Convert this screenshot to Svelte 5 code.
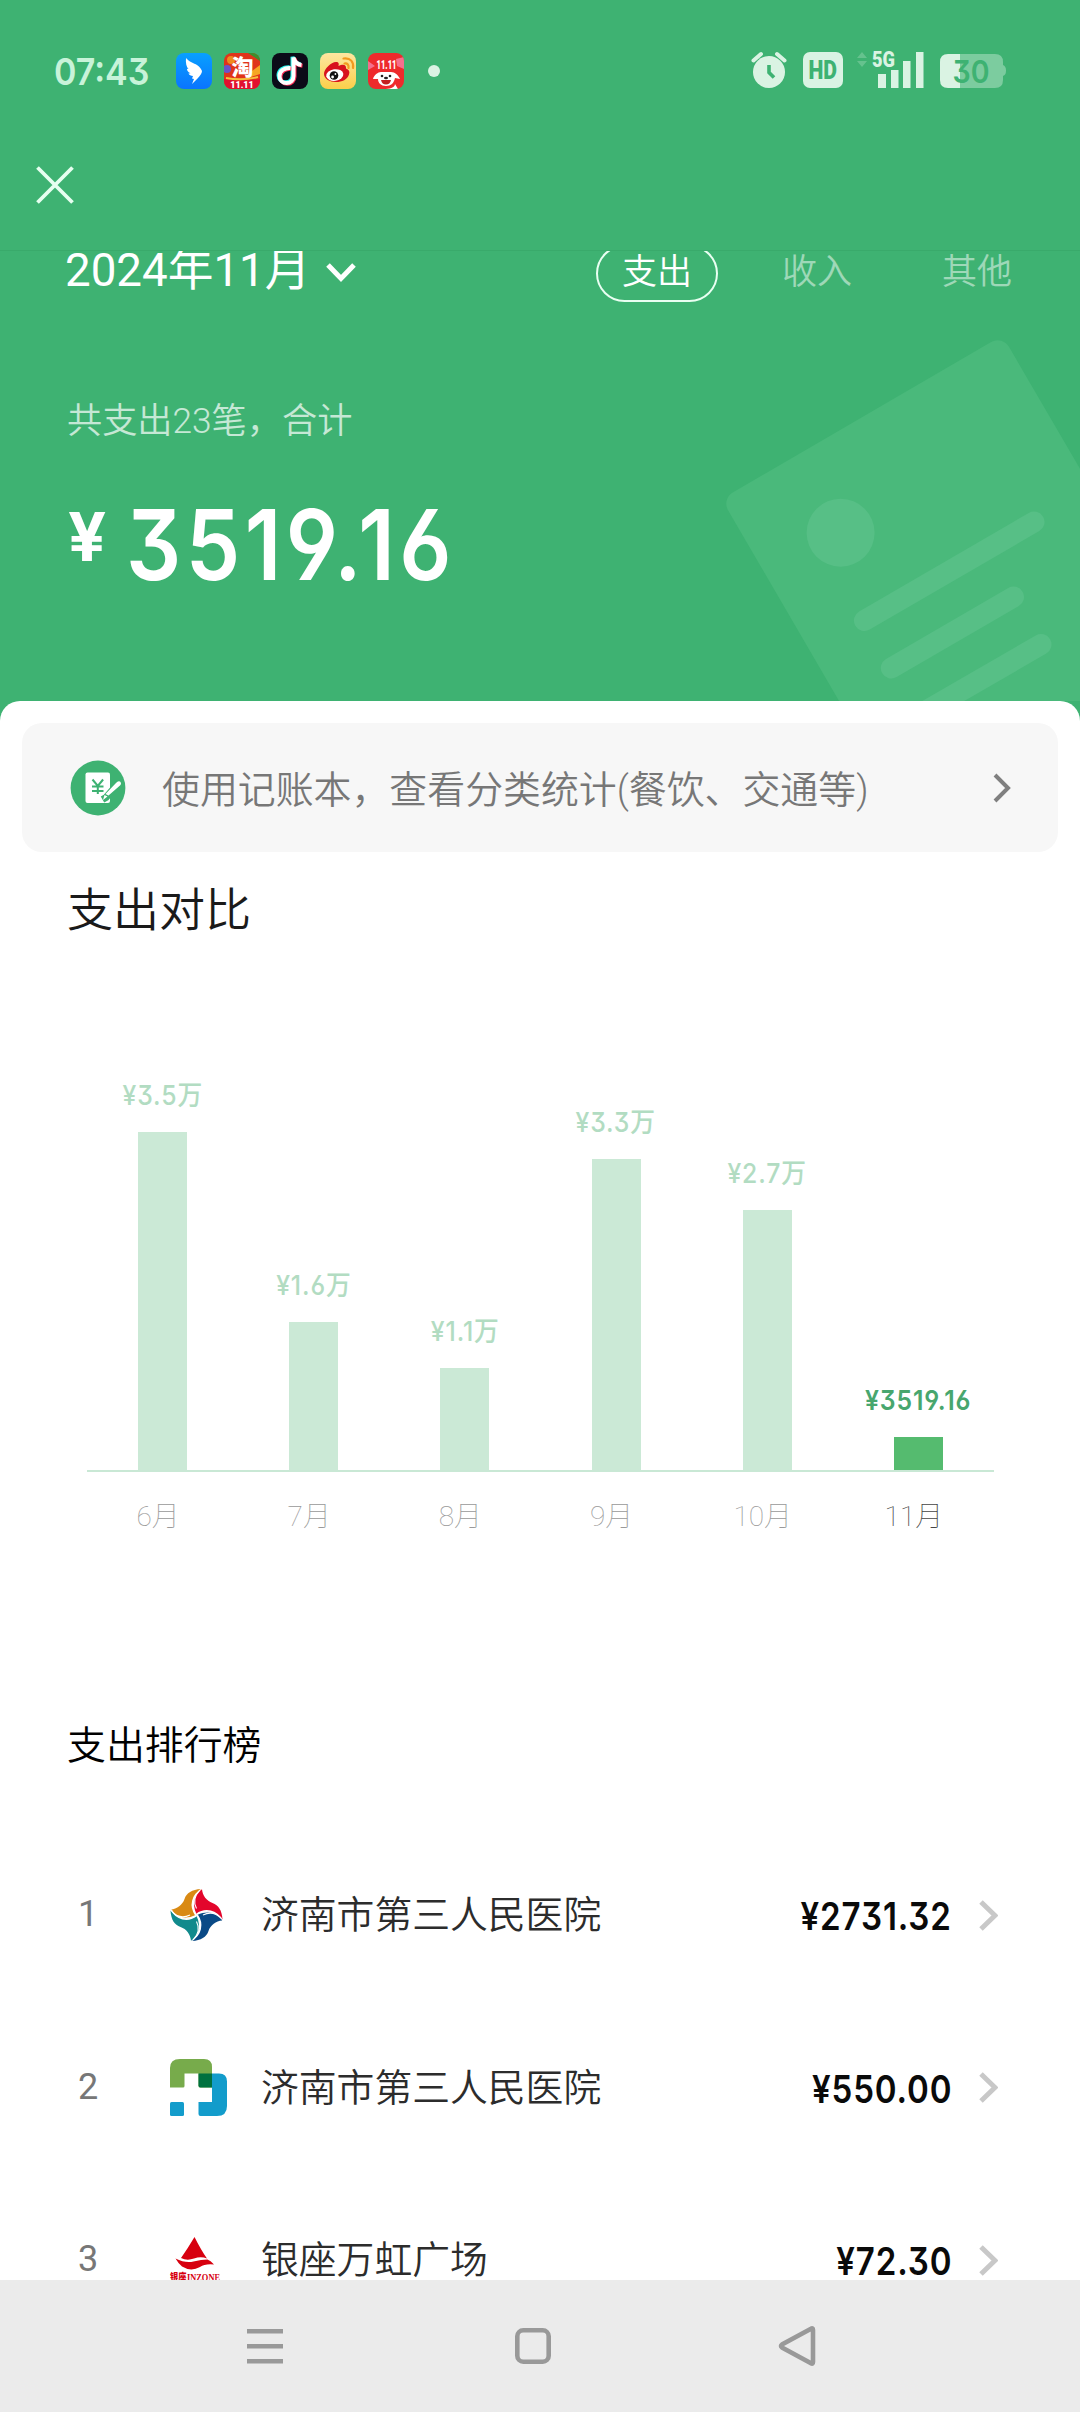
<script>
  const tabs = ['支出', '收入', '其他'];
  let activeTab = '支出';

  const months = [
    { name: '6月', label: '¥3.5万', height: 338 },
    { name: '7月', label: '¥1.6万', height: 148 },
    { name: '8月', label: '¥1.1万', height: 102 },
    { name: '9月', label: '¥3.3万', height: 311 },
    { name: '10月', label: '¥2.7万', height: 260 },
    { name: '11月', label: '¥3519.16', height: 33, current: true }
  ];

  const ranking = [
    { logo: 'pinwheel', name: '济南市第三人民医院', amount: '¥2731.32' },
    { logo: 'blocks', name: '济南市第三人民医院', amount: '¥550.00' },
    { logo: 'sail', name: '银座万虹广场', amount: '¥72.30' }
  ];

  const petals = [
    { color: '#d98a14', angle: 0 },
    { color: '#e3062c', angle: 90 },
    { color: '#0a4a86', angle: 180 },
    { color: '#118a8c', angle: 270 }
  ];
</script>

<div class="screen">
  <header>
    <div class="status">
      <span class="time num">07:43</span>
      <div class="apps">
        <svg viewBox="0 0 36 36">
          <defs>
            <linearGradient id="ding" x1="0" y1="0" x2="0" y2="1">
              <stop offset="0" stop-color="#08a0ff" />
              <stop offset="1" stop-color="#0a74ff" />
            </linearGradient>
          </defs>
          <rect width="36" height="36" rx="8" fill="url(#ding)" />
          <path d="M10 5c3 4 8 5 11 7 3 2 4 4 5 6 0 2-2 5-4 7l-6 6 2-5-2-.5 1-2.500c-2 0-4-1-4.500-2.500l2-.3c-3-1.200-3.500-3-3.500-4.500l1.500.3c-2-2-3-6-2.500-11z" fill="#fff" />
        </svg>
        <svg viewBox="0 0 36 36">
          <clipPath id="tao"><rect width="36" height="36" rx="8" /></clipPath>
          <g clip-path="url(#tao)">
            <rect width="36" height="36" fill="#e0341a" />
            <circle cx="7" cy="7" r="4" fill="#f08a1d" />
            <path d="M24 0h12v8z" fill="#3d8f2e" />
            <circle cx="3" cy="16" r="4" fill="#6b53c9" />
            <path d="M28 18l8-6v9l-9 3z" fill="#f6a723" />
            <path d="M0 26q18 3 36 0v10H0z" fill="#e2102f" />
            <path d="M2 25q16 3 32-1" stroke="#f6c33c" stroke-width="2" fill="none" />
          </g>
          <text x="18.500" y="22" class="tao-char">淘</text>
          <text x="18" y="34.500" class="tao-date">11.11</text>
        </svg>
        <svg viewBox="0 0 36 36">
          <rect width="36" height="36" rx="8" fill="#0b0b18" />
          <g fill="none" stroke-width="4">
            <path d="M18.500 15c-6-.5-11 3-11 8 0 4 3 7 7 7s7-3 7-7V4.500c1 5 4 7 8 7.500" stroke="#25f4ee" transform="translate(-1 -.8)" />
            <path d="M18.500 15c-6-.5-11 3-11 8 0 4 3 7 7 7s7-3 7-7V4.500c1 5 4 7 8 7.500" stroke="#fe2c55" transform="translate(1 .8)" />
            <path d="M18.500 15c-6-.5-11 3-11 8 0 4 3 7 7 7s7-3 7-7V4.500c1 5 4 7 8 7.500" stroke="#fff" />
          </g>
        </svg>
        <svg viewBox="0 0 36 36">
          <defs>
            <linearGradient id="weibo" x1="0" y1="0" x2="0" y2="1">
              <stop offset="0" stop-color="#fde6a0" />
              <stop offset="1" stop-color="#fbcf4a" />
            </linearGradient>
          </defs>
          <rect width="36" height="36" rx="8" fill="url(#weibo)" />
          <path d="M4 21c0-5 7-12 12-12 3 0 3 2 2.500 4 4-2 8-2 7.500 2.500 3 1 4 3 3 6-1.500 5-7 7.500-13 7.500S4 26 4 21z" fill="#d8121d" />
          <ellipse cx="14.800" cy="22" rx="8.600" ry="5.800" transform="rotate(-8 15 22)" fill="#fff" />
          <circle cx="14" cy="22.500" r="4.300" fill="#111" />
          <circle cx="12.600" cy="24" r="1.400" fill="#fff" />
          <circle cx="15.400" cy="21" r=".9" fill="#fff" />
          <path d="M24.500 10.500c3-.5 4.500 1.500 4 4.500M23.500 5.500c7-1 10.500 3.500 9.500 9.500" fill="none" stroke="#f29a1f" stroke-width="2.200" stroke-linecap="round" />
        </svg>
        <svg viewBox="0 0 36 36">
          <clipPath id="jd"><rect width="36" height="36" rx="8" /></clipPath>
          <g clip-path="url(#jd)">
            <rect width="36" height="36" fill="#ee2a2c" />
            <path d="M28 6l8-2v12l-7-3zM0 8l7 5-7 4z" fill="#f46f8d" />
            <path d="M5 26c1-4 5-7 8-7h10c4 0 7 3 9 7l-5-1c-1 5-4 8-9 8s-8-3-8-7z" fill="#fff" />
            <path d="M16 36c5 0 11-1 11-5l3 5z" fill="#fff" />
            <circle cx="14" cy="23" r="1.300" fill="#222" />
            <circle cx="22" cy="23" r="1.300" fill="#222" />
            <ellipse cx="18" cy="25" rx="2" ry="1.200" fill="#222" />
            <path d="M13 27h10q-1 4.500-5 4.500T13 27z" fill="#c4201f" />
          </g>
          <text x="18.500" y="16" class="jd-date" textLength="20" lengthAdjust="spacingAndGlyphs">11.11</text>
        </svg>
      </div>
      <i class="dot"></i>
      <svg class="indicators" width="256" height="40" viewBox="750 50 256 40">
        <g fill="#daf3e3">
          <circle cx="769" cy="72" r="16" />
          <path d="M753.500 60.500l7.500-6.500M784.500 60.500l-7.500-6.500" stroke="#daf3e3" stroke-width="4" stroke-linecap="round" />
          <path d="M769 65v7.500l5 5" fill="none" stroke="#3eb272" stroke-width="3.600" />
          <rect x="803" y="52" width="40" height="36" rx="7" />
          <text x="808.500" y="79" class="hd" textLength="28.500" lengthAdjust="spacingAndGlyphs">HD</text>
          <path d="M857 58l5-6 5 6zM857 61l5 6 5-6z" opacity=".25" />
          <text x="872" y="67" class="net" textLength="23" lengthAdjust="spacingAndGlyphs">5G</text>
          <path d="M878 74h8v14h-8zM891 70h7.500v18H891zM903 61h7.500v27H903zM916 52h7.500v36H916z" />
          <path d="M960 54h35q8 0 8 8v3q3 1 3 5.500t-3 5.500v4q0 8-8 8h-35z" opacity=".4" />
          <path d="M948 54h12v34h-12q-8 0-8-8V62q0-8 8-8z" />
          <text x="952.500" y="83" class="battery" textLength="37" lengthAdjust="spacingAndGlyphs">30</text>
        </g>
      </svg>
    </div>
    <svg class="close" width="38" height="38" viewBox="0 0 38 38">
      <path d="M1.500 1.500l35 35M36.500 1.500l-35 35" />
    </svg>
  </header>

  <main>
    <section class="summary">
      <svg class="bill" width="1080" height="450" viewBox="0 251 1080 450">
        <rect width="325" height="460" rx="13" transform="translate(721.500 499) rotate(-30.200)" fill="#4ab97b" />
        <circle cx="840.600" cy="532.700" r="34" fill="#57bf86" />
        <path d="M864.400 620.500L1034 522M891.300 668L1013.500 597M900 726L1041 644.500" stroke="#57bf86" stroke-width="21" stroke-linecap="round" />
      </svg>
      <div class="filters">
        <span class="month">2024年11月</span>
        <svg width="30" height="22" viewBox="0 0 30 22">
          <path d="M2 3l13 13.500L28 3" fill="none" stroke="#fff" stroke-width="5" />
        </svg>
        <nav>
          {#each tabs as tab}
            <button class:active={tab === activeTab} on:click={() => (activeTab = tab)}>{tab}</button>
          {/each}
        </nav>
      </div>
      <p class="count">共支出23笔，合计</p>
      <p class="total"><span class="yen num">¥</span><span class="sum num">3519.16</span></p>
    </section>

    <section class="sheet">
      <a class="ledger" href="#ledger" on:click|preventDefault>
        <svg width="56" height="56" viewBox="0 0 56 56">
          <circle cx="28" cy="28" r="27.400" fill="#3eb272" />
          <rect x="15.500" y="12.500" width="24.500" height="30.500" rx="2" fill="#fff" />
          <path d="M22.500 19.500l5.300 6.500 5.300-6.500M22 26.500h11.500M22 31h11.500M27.800 26v8" fill="none" stroke="#3eb272" stroke-width="2" />
          <path d="M49 22.500L36 37.500l-3.500 2" fill="none" stroke="#3eb272" stroke-width="7" />
          <path d="M50 21.500q2 2 0 4L38.500 35.500l-3-1.500L46 23q2-2.500 4-1.500zM34.500 35l3 1.500-4.500 3.500z" fill="#fff" />
        </svg>
        <span>使用记账本，查看分类统计(餐饮、交通等)</span>
        <svg class="arrow" width="18" height="30" viewBox="0 0 18 30">
          <path d="M2 2l13 13L2 28" />
        </svg>
      </a>

      <h2>支出对比</h2>
      <div class="chart">
        {#each months as month}
          <div class="column" class:current={month.current}>
            <span class="label num">{month.label}</span>
            <div class="bar" style="height: {month.height}px"></div>
          </div>
        {/each}
      </div>
      <div class="axis">
        {#each months as month}
          <span class:current={month.current}>{month.name}</span>
        {/each}
      </div>

      <h3>支出排行榜</h3>
      <ol>
        {#each ranking as item, i}
          <li>
            <span class="rank">{i + 1}</span>
            <span class="logo">
              {#if item.logo === 'pinwheel'}
                <svg width="53" height="52" viewBox="0 0 53 52">
                  {#each petals as petal}
                    <g transform="rotate({petal.angle} 26.500 26)">
                      <path d="M31 0C22 .5 16.500 4 14.500 10 12.500 16 7 20 .8 20.500 5 27 14 31.500 25.800 26 20 18 22 7 31 0z" fill={petal.color} />
                      <path d="M1.500 22.500C7 28 14 29 20 26" fill="none" stroke="#fff" stroke-width="1.100" />
                      <path d="M32 .5C22 6 19.500 17 25.800 26" fill="none" stroke="#fff" stroke-width="1.500" />
                    </g>
                  {/each}
                </svg>
              {:else if item.logo === 'blocks'}
                <svg width="57" height="57" viewBox="0 0 57 57">
                  <path d="M10 0h24q8 0 8 8v20.500H30q-1.500 0-1.500-1.500V14.500h-14V27q0 1.500-1.500 1.500H0V9q0-9 10-9z" fill="#77ab4b" />
                  <path d="M42 14.500h7q8 0 8 8V47q0 10-10 10H30.500q-2 0-2-2V43H42z" fill="#139ccb" />
                  <path d="M28.500 14.500H42v14H30.500q-2 0-2-2z" fill="#00713f" />
                  <rect y="43" width="14" height="14" rx="1.500" fill="#139ccb" />
                </svg>
              {:else}
                <svg width="50" height="46" viewBox="0 0 50 46">
                  <path d="M24.500 0Q31 13 37 21.500 31 19 24 21.500T11 21Q18 11 24.500 0z" fill="#d7000f" />
                  <path d="M5.500 21.500q10 5 18 3t14-2q3 1 6.500 5-9-1-14 2.500-9 5-18-.5Q8 26 5.500 21.500z" fill="#d7000f" />
                  <text x="0" y="44" class="inzone-cn" textLength="16.500" lengthAdjust="spacingAndGlyphs">银座</text>
                  <text x="17" y="43.500" class="inzone" textLength="33" lengthAdjust="spacingAndGlyphs">INZONE</text>
                </svg>
              {/if}
            </span>
            <span class="name">{item.name}</span>
            <span class="amount num">{item.amount}</span>
            <svg class="arrow" width="19" height="31" viewBox="0 0 19 31">
              <path d="M2 2l14 13.500L2 29" />
            </svg>
          </li>
        {/each}
      </ol>
    </section>
  </main>

  <footer>
    <svg width="36" height="36" viewBox="0 0 36 36">
      <path d="M0 3.300h36M0 18.300h36M0 33.300h36" />
    </svg>
    <svg class="home" width="36" height="36" viewBox="0 0 36 36">
      <rect x="2.300" y="2.300" width="31.400" height="31.400" rx="6" />
    </svg>
    <svg width="38" height="40" viewBox="0 0 38 40">
      <path d="M33 2.800Q35 1.500 35 4v32q0 2.500-2 1.200L4 21.500q-2-1.500 0-3z" />
    </svg>
  </footer>
</div>

<style>
  :global(body) {
    margin: 0;
  }

  .screen {
    --green: #3eb272;

    background: var(--green);
    display: flex;
    flex-direction: column;
    font-family: Roboto, 'Noto Sans CJK SC', sans-serif;
    font-weight: 350;
    height: 2412px;
    overflow: hidden;
    width: 1080px;
  }

  .num {
    display: inline-block;
    font-family: Inter, 'Noto Sans CJK SC', sans-serif;
    font-feature-settings: 'cv03', 'cv04', 'cv09';
    white-space: nowrap;
  }

  h2, h3, p, ol {
    font-weight: inherit;
    margin: 0;
    padding: 0;
  }

  header {
    border-bottom: 1px solid #39aa6b;
    box-sizing: border-box;
    flex: none;
    height: 251px;
  }

  .status {
    align-items: center;
    box-sizing: border-box;
    display: flex;
    height: 142px;
    padding-left: 54px;
  }

  .time {
    color: #c8f3d9;
    font-size: 37px;
    font-weight: 620;
    transform: scaleX(0.92);
    transform-origin: left;
    width: 122px;
  }

  .apps {
    display: flex;
    gap: 12px;
  }

  .apps svg {
    height: 36px;
    overflow: visible;
    width: 36px;
  }

  .tao-char, .tao-date, .jd-date {
    fill: #fff;
    font-family: 'Noto Sans CJK SC', sans-serif;
    font-size: 22px;
    font-weight: 900;
    text-anchor: middle;
  }

  .tao-date {
    font-family: Roboto, sans-serif;
    font-size: 9px;
  }

  .jd-date {
    font-family: Roboto, sans-serif;
    font-size: 12px;
  }

  .dot {
    background: #daf3e3;
    border-radius: 50%;
    height: 12px;
    margin-left: 24px;
    width: 12px;
  }

  .indicators {
    margin: -2px 74px 0 auto;
    overflow: visible;
  }

  .hd, .battery {
    fill: var(--green);
    font-family: Roboto, sans-serif;
    font-size: 25px;
    font-weight: 900;
  }

  .net {
    font-family: Roboto, sans-serif;
    font-size: 22px;
    font-weight: 900;
  }

  .battery {
    font-family: Inter, sans-serif;
    font-feature-settings: 'cv09';
    font-size: 31px;
    font-weight: 600;
  }

  .close {
    display: block;
    margin: 24px 0 0 36px;
  }

  .close path {
    fill: none;
    stroke: #e6fff0;
    stroke-width: 3.8;
  }

  main {
    display: flex;
    flex: 1;
    flex-direction: column;
    min-height: 0;
    overflow: hidden;
  }

  .summary {
    color: #fff;
    flex: none;
    height: 450px;
    position: relative;
  }

  .bill {
    left: 0;
    position: absolute;
    top: 0;
  }

  .filters {
    align-items: center;
    display: flex;
    height: 58px;
    margin-top: -7px;
    padding: 0 46px 0 65px;
    position: relative;
  }

  .month {
    font-size: 45.7px;
    font-weight: 400;
    line-height: 46px;
    margin: 0 16px 4px 0;
  }

  nav {
    display: flex;
    gap: 42px;
    margin-left: auto;
  }

  button {
    background: none;
    border: 2px solid transparent;
    border-radius: 29px;
    box-sizing: border-box;
    color: rgba(255, 255, 255, 0.5);
    font: inherit;
    font-size: 35px;
    height: 57px;
    line-height: 50px;
    margin-right: -4px;
    padding: 0;
    width: 122px;
  }

  button.active {
    border-color: #e9fff2;
    color: #fff;
  }

  .count {
    font-size: 35.2px;
    line-height: 50px;
    margin: 94px 0 0 67px;
    opacity: 0.7;
    position: relative;
  }

  .total {
    display: flex;
    line-height: 100px;
    margin: 49px 0 0 68px;
    position: relative;
  }

  .yen {
    font-size: 67px;
    font-weight: 700;
    transform: translateY(-8px) scaleX(1);
    transform-origin: left;
    width: 58px;
  }

  .sum {
    font-size: 97px;
    font-weight: 620;
    letter-spacing: 5px;
    transform: scaleX(0.893);
    transform-origin: left;
  }

  .sheet {
    background: #fff;
    border-radius: 20px 20px 0 0;
    flex: none;
    padding-top: 22px;
  }

  .ledger {
    align-items: center;
    background: #f7f7f7;
    border-radius: 20px;
    color: #777;
    display: flex;
    font-size: 37.9px;
    height: 129px;
    margin: 0 22px;
    text-decoration: none;
  }

  .ledger span {
    padding-bottom: 3px;
  }

  .ledger svg:first-child {
    margin: 0 36px 0 48px;
  }

  .arrow {
    fill: none;
    margin-left: auto;
    stroke: #808080;
    stroke-width: 4;
  }

  .ledger .arrow {
    margin-right: 47px;
  }

  h2 {
    color: #1a1a1a;
    font-size: 46px;
    line-height: 60px;
    margin: 28px 0 0 67px;
  }

  .chart, .axis {
    display: grid;
    grid-template-columns: repeat(6, 1fr);
    margin: 0 86px 0 87px;
  }

  .chart {
    align-items: end;
    border-bottom: 2px solid #c9e8d5;
    height: 530px;
  }

  .column {
    align-items: center;
    display: flex;
    flex-direction: column;
  }

  .label {
    color: #b2dcc2;
    font-size: 27.5px;
    font-weight: 500;
    letter-spacing: 1px;
    line-height: 34px;
    margin-bottom: 20px;
    transform: scaleX(0.9);
  }

  .bar {
    background: #cbe9d6;
    width: 49px;
  }

  .current .label {
    color: #48a66e;
    font-weight: 600;
  }

  .current .bar {
    background: #55bb6f;
  }

  .axis {
    color: #999;
    font-size: 28px;
    font-weight: 100;
    line-height: 40px;
    margin-top: 25px;
    text-align: center;
  }

  .axis span {
    margin-left: -9px;
  }

  .axis .current {
    color: #444;
  }

  h3 {
    color: #000;
    font-size: 38.9px;
    line-height: 60px;
    margin: 179px 0 0 67px;
  }

  ol {
    list-style: none;
    margin-top: 53px;
  }

  li {
    align-items: center;
    display: flex;
    height: 172.5px;
    padding: 0 82px 0 78px;
  }

  .rank {
    color: #777;
    font-size: 36px;
    font-weight: 400;
    padding: 0 1px 2px 0;
    width: 91px;
  }

  .logo {
    display: flex;
    width: 91px;
  }

  .logo svg {
    overflow: visible;
  }

  .inzone, .inzone-cn {
    fill: #d7000f;
    font-family: 'Liberation Serif', serif;
    font-size: 10px;
    font-weight: 700;
  }

  .inzone-cn {
    font-family: 'Noto Sans CJK SC', sans-serif;
    font-size: 10.5px;
    font-weight: 900;
  }

  .name {
    color: #2c2c2c;
    font-size: 37.8px;
    padding-bottom: 7px;
  }

  .amount {
    color: #0a0a0a;
    font-size: 38px;
    font-weight: 600;
    letter-spacing: 1px;
    margin-left: auto;
    margin-right: -2px;
    padding-top: 2px;
    transform: scaleX(0.87);
    transform-origin: right;
  }

  li .arrow {
    margin-left: 29px;
    stroke: #c8c8c8;
    stroke-width: 5;
  }

  footer {
    align-items: center;
    background: #ebebeb;
    box-sizing: border-box;
    display: flex;
    flex: none;
    height: 132px;
    justify-content: space-between;
    padding: 0 264px 0 247px;
  }

  footer svg {
    fill: none;
    stroke: #999;
    stroke-width: 4.6;
  }

  .home {
    margin: 0 -2px 0 2px;
  }
</style>
